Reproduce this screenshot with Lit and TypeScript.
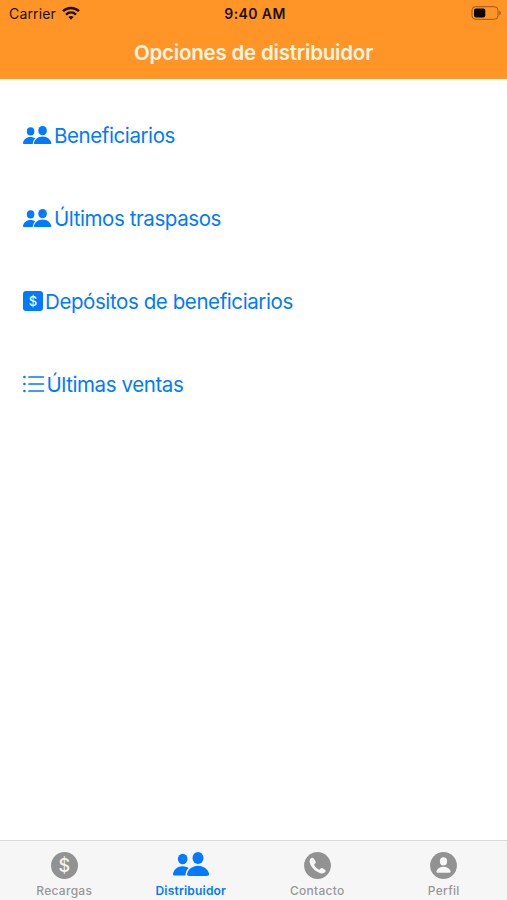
import { LitElement, html, css, svg } from "lit";
import { customElement } from "lit/decorators.js";
import { classMap } from "lit/directives/class-map.js";

const people = html`<svg class="people" viewBox="0 0 36.4 23.6" preserveAspectRatio="none" fill="currentColor">
  ${svg`<ellipse cx="9.7" cy="6.9" rx="4.8" ry="5.2"/>
  <ellipse cx="25" cy="5.9" rx="5.5" ry="5.9"/>
  <path d="M1.4 23.2C.1 23.2-.1 22.2.1 21.200C.9 17.200 4.500 13.900 9.400 13.900C11.900 13.900 14 14.600 15.600 15.800C13.700 17.700 12.700 19.500 12.500 23.200Z"/>
  <path d="M16.300 23.600C14.400 23.600 13.800 22.600 14.200 21.100C15.200 17 19.500 13.400 25 13.400C30.600 13.400 35 17 36 21.100C36.400 22.600 35.700 23.600 33.800 23.600Z"/>`}
</svg>`;

const list = html`<svg class="list" viewBox="0 0 22 18">
  ${svg`<g fill="currentColor"><circle cx="1.4" cy="2" r="1.3"/><circle cx="1.4" cy="9" r="1.3"/><circle cx="1.4" cy="16" r="1.3"/></g>
  <path d="M6 2H20.400M6 9H20.400M6 16H20.400" stroke="currentColor" stroke-width="1.7" stroke-linecap="round"/>`}
</svg>`;

const phone = html`<svg class="disc-icon" viewBox="0 0 27 27">
  ${svg`<circle cx="13.5" cy="13.5" r="13.4" fill="currentColor"/>
  <path d="M7.500 6.100C8.400 5.500 9.200 5.800 9.800 6.600L11.500 9.300C12 10.100 11.900 10.800 11.300 11.300L10.400 12.200C10 12.600 10.200 13 10.400 13.400C11.500 15.200 12.900 16.500 14.700 17.500C15.100 17.700 15.500 17.700 15.900 17.300L16.700 16.400C17.200 15.900 17.900 15.900 18.600 16.200L20.900 17.700C21.700 18.200 21.900 19 21.400 19.800C20.300 21.400 18.500 21.800 16.600 21.300C11.300 19.900 7 15.200 5.700 10.600C5.200 8.800 5.900 7.100 7.500 6.100Z" fill="#f7f7f7"/>`}
</svg>`;

const person = html`<svg class="disc-icon" viewBox="0 0 27 27">
  ${svg`<circle cx="13.5" cy="13.5" r="13.4" fill="currentColor"/>
  <ellipse cx="13.5" cy="9.400" rx="3.600" ry="4.100" fill="#f7f7f7"/>
  <path d="M7.600 20.800C6.600 20.800 6.200 20.100 6.500 19.100C7.400 16.600 10 14.800 13.500 14.800C17 14.800 19.600 16.600 20.500 19.100C20.800 20.100 20.400 20.800 19.400 20.800Z" fill="#f7f7f7"/>`}
</svg>`;

const coin = html`<span class="coin">$</span>`;
const bill = html`<span class="bill"><span class="sign">$</span></span>`;

@customElement("app-root")
export class AppRoot extends LitElement {
  static styles = css`
    :host {
      display: flex;
      flex-direction: column;
      height: 900px;
      background: #fff;
      font-family: Inter, "Liberation Sans", sans-serif;
      color: #007aff;
    }
    header { height: 79px; background: #ff9526; flex: none; }
    .status {
      display: grid;
      grid-template-columns: 1fr auto 1fr;
      align-items: center;
      height: 27px;
      padding: 0 6px 0 9px;
      color: #1c1003;
      font-size: 14px;
      line-height: 27px;
    }
    .carrier { display: flex; align-items: center; gap: 6px; letter-spacing: 0.15px; }
    .wifi { width: 18px; height: 14px; margin-top: -2px; }
    .time { font-weight: 600; letter-spacing: 0.4px; }
    .battery { width: 30px; height: 14px; justify-self: end; margin-top: -1px; }
    h1 {
      margin: 0;
      height: 52px;
      line-height: 52px;
      text-align: center;
      font-size: 20.5px;
      font-weight: 600;
      letter-spacing: -0.2px;
      color: #fff5e2;
    }
    main { flex: 1; padding-top: 15px; }
    .option {
      display: flex;
      align-items: center;
      height: 83px;
      padding-left: 23px;
      font-size: 20.5px;
      letter-spacing: -0.41px;
      white-space: nowrap;
    }
    .option .people { width: 28.500px; height: 18.500px; margin: -1px 2.500px 0 0; }
    .option .list { width: 22px; height: 18px; margin: -1px 2px 0 -0.500px; }
    .bill {
      width: 20px;
      height: 20px;
      border-radius: 3px;
      background: #007aff;
      margin: -1px 2px 0 0;
      text-align: center;
      letter-spacing: 0;
    }
    .sign { display: block; color: #fff; font-size: 13px; line-height: 20px; font-weight: 500; }
    nav {
      display: grid;
      grid-template-columns: repeat(4, 1fr);
      height: 59px;
      padding-left: 1px;
      border-top: 1px solid #d9d8d9;
      background: #f7f6f7;
    }
    .tab {
      display: flex;
      flex-direction: column;
      align-items: center;
      color: #979797;
      font-size: 12px;
      font-weight: 500;
      letter-spacing: 0.28px;
    }
    .tab.active { color: #007aff; font-weight: 600; letter-spacing: 0.2px; }
    .glyph { height: 42px; display: flex; align-items: flex-start; padding-top: 11px; box-sizing: border-box; }
    .tab .people { width: 36.400px; height: 24px; margin-top: -0.500px; }
    .disc-icon { width: 27px; height: 27px; color: #939293; }
    .coin {
      width: 27px;
      height: 27px;
      border-radius: 50%;
      background: #939293;
      color: #f3f3f3;
      text-align: center;
      font-size: 18px;
      line-height: 27px;
      letter-spacing: 0;
    }
    .label { line-height: 15px; }
  `;

  private options = [
    { icon: people, text: "Beneficiarios" },
    { icon: people, text: "Últimos traspasos" },
    { icon: bill, text: "Depósitos de beneficiarios" },
    { icon: list, text: "Últimas ventas" },
  ];

  private tabs = [
    { icon: coin, text: "Recargas", active: false },
    { icon: people, text: "Distribuidor", active: true },
    { icon: phone, text: "Contacto", active: false },
    { icon: person, text: "Perfil", active: false },
  ];

  render() {
    return html`
      <header>
        <div class="status">
          <span class="carrier">Carrier
            <svg class="wifi" viewBox="0 0 18 14" fill="none" stroke="currentColor" stroke-width="2.5">
              <path d="M1 5.200C5.500.8 12.500.8 17 5.200"/>
              <path d="M4 8.600C6.900 5.900 11.100 5.900 14 8.600"/>
              <path d="M9 13.700L6.400 11C7.900 9.700 10.100 9.700 11.600 11Z" fill="currentColor" stroke="none"/>
            </svg>
          </span>
          <span class="time">9:40 AM</span>
          <svg class="battery" viewBox="0 0 30 14">
            <rect x="1" y=".7" width="26" height="12.600" rx="3.500" fill="none" stroke="#995918" stroke-width="1"/>
            <rect x="3" y="2.600" width="11.300" height="8.800" rx="1.800" fill="#0a0500"/>
            <path d="M28.300 4.700C30.200 5.500 30.200 8.500 28.300 9.300Z" fill="#995918"/>
          </svg>
        </div>
        <h1>Opciones de distribuidor</h1>
      </header>
      <main>
        ${this.options.map((o) => html`<div class="option">${o.icon}<span>${o.text}</span></div>`)}
      </main>
      <nav>
        ${this.tabs.map(
          (t) => html`<div class=${classMap({ tab: true, active: t.active })}>
            <span class="glyph">${t.icon}</span><span class="label">${t.text}</span>
          </div>`
        )}
      </nav>
    `;
  }
}
